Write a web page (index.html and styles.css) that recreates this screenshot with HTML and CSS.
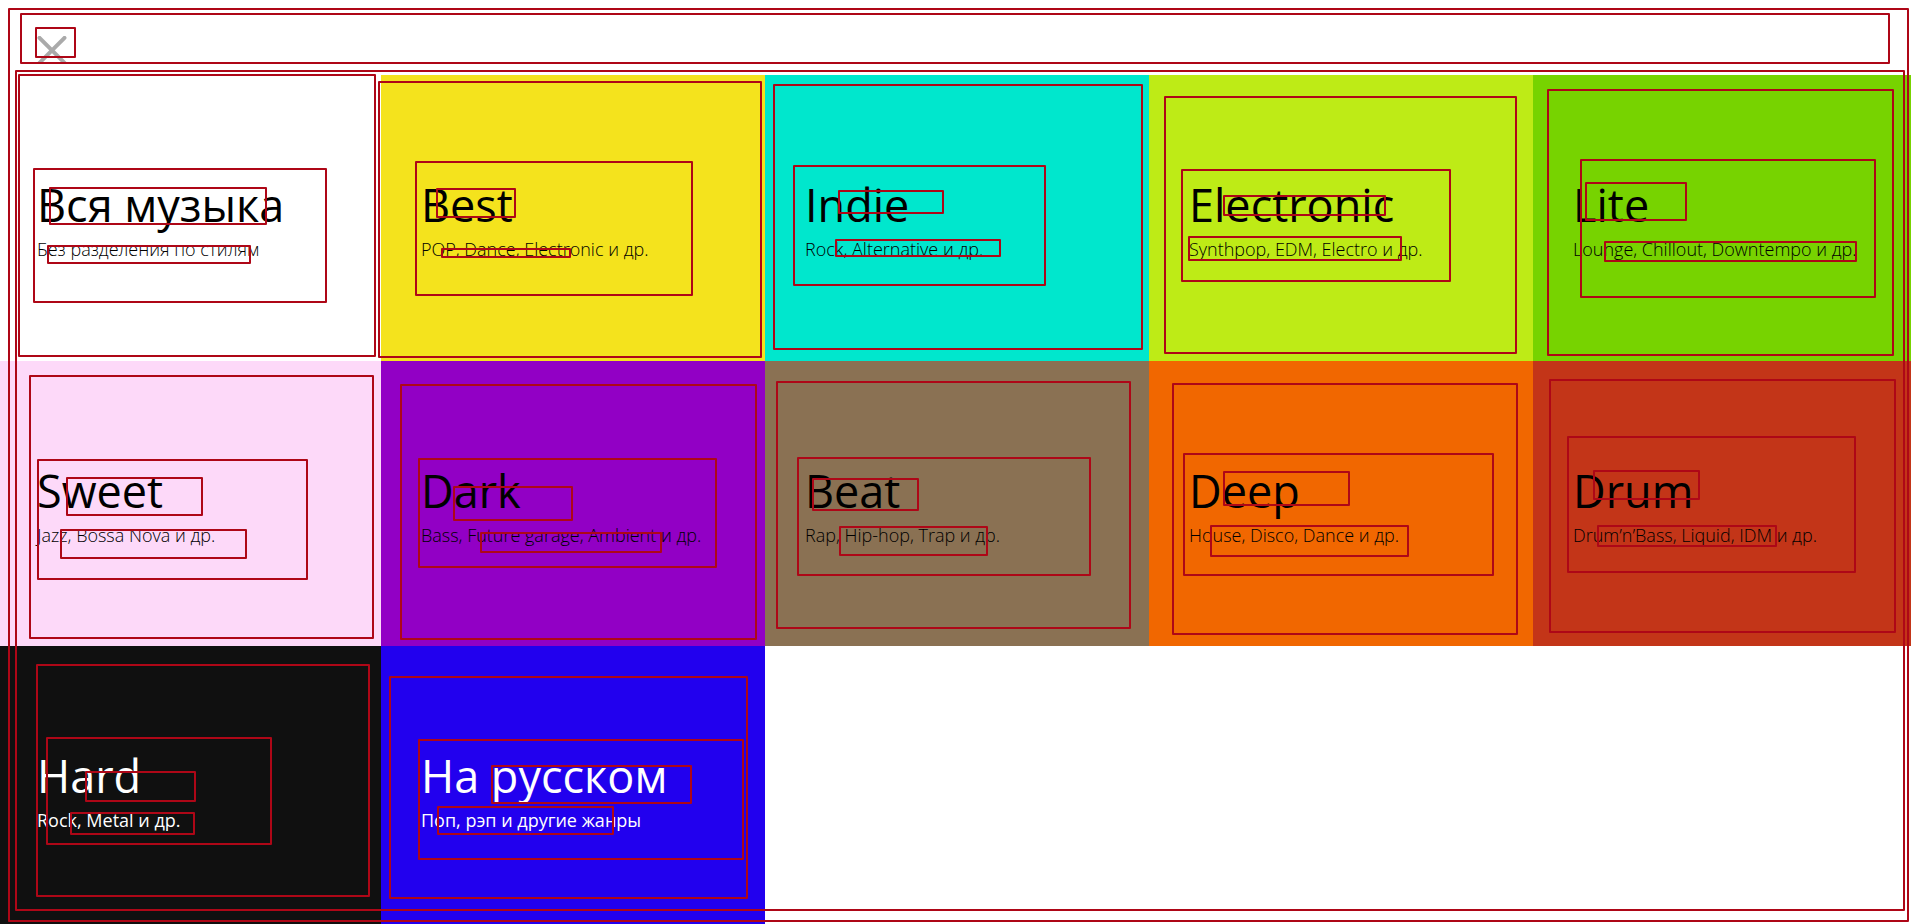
FILE: index.html
```html
<!DOCTYPE html>
<html lang="ru">
<head>
<meta charset="utf-8">
<meta name="viewport" content="width=device-width, initial-scale=1">
<title>Стили музыки</title>
<link rel="stylesheet" href="styles.css">
</head>
<body>
<header class="topbar">
  <button class="close" type="button" aria-label="Закрыть">
    <svg class="close-icon" viewBox="0 0 30 26" width="30" height="26" aria-hidden="true"><path d="M2.5 1.8 27.5 26.8M27.5 1.8 2.5 26.8"/></svg>
  </button>
</header>
<main class="styles">
  <a class="tile all" href="#all"><h2 class="name">Вся музыка</h2><p class="genres">Без разделения по стилям</p></a>
  <a class="tile best" href="#best"><h2 class="name">Best</h2><p class="genres">POP, Dance, Electronic и др.</p></a>
  <a class="tile indie" href="#indie"><h2 class="name">Indie</h2><p class="genres">Rock, Alternative и др.</p></a>
  <a class="tile electronic" href="#electronic"><h2 class="name">Electronic</h2><p class="genres">Synthpop, EDM, Electro и др.</p></a>
  <a class="tile lite" href="#lite"><h2 class="name">Lite</h2><p class="genres">Lounge, Chillout, Downtempo и др.</p></a>
  <a class="tile sweet" href="#sweet"><h2 class="name">Sweet</h2><p class="genres">Jazz, Bossa Nova и др.</p></a>
  <a class="tile dark" href="#dark"><h2 class="name">Dark</h2><p class="genres">Bass, Future garage, Ambient и др.</p></a>
  <a class="tile beat" href="#beat"><h2 class="name">Beat</h2><p class="genres">Rap, Hip-hop, Trap и др.</p></a>
  <a class="tile deep" href="#deep"><h2 class="name">Deep</h2><p class="genres">House, Disco, Dance и др.</p></a>
  <a class="tile drum" href="#drum"><h2 class="name">Drum</h2><p class="genres">Drum’n’Bass, Liquid, IDM и др.</p></a>
  <a class="tile hard light-text" href="#hard"><h2 class="name">Hard</h2><p class="genres">Rock, Metal и др.</p></a>
  <a class="tile russian light-text" href="#russian"><h2 class="name">На русском</h2><p class="genres">Поп, рэп и другие жанры</p></a>
</main>
<!-- Region outlines drawn over the page -->
<svg class="outlines" aria-hidden="true">
  <rect x="9" y="9" width="1899" height="912"/>
  <rect x="21" y="14" width="1868" height="49"/>
  <rect x="36" y="28" width="39" height="29"/>
  <rect x="16" y="71" width="1888" height="839"/>

  <rect x="19" y="75" width="356" height="281"/>
  <rect x="34" y="169" width="292" height="133"/>
  <rect x="50" y="188" width="216" height="36"/>
  <rect x="48" y="246" width="202" height="17"/>

  <rect x="379" y="82" width="382" height="275"/>
  <rect x="416" y="162" width="276" height="133"/>
  <rect x="437" y="189" width="78" height="28"/>
  <rect x="442" y="249" width="128" height="8"/>

  <rect x="774" y="85" width="368" height="264"/>
  <rect x="794" y="166" width="251" height="119"/>
  <rect x="839" y="191" width="104" height="22"/>
  <rect x="836" y="240" width="164" height="16"/>

  <rect x="1165" y="97" width="351" height="256"/>
  <rect x="1182" y="170" width="268" height="111"/>
  <rect x="1224" y="196" width="161" height="19"/>
  <rect x="1189" y="237" width="212" height="23"/>

  <rect x="1548" y="90" width="345" height="265"/>
  <rect x="1581" y="160" width="294" height="137"/>
  <rect x="1586" y="183" width="100" height="37"/>
  <rect x="1605" y="242" width="251" height="19"/>

  <rect x="30" y="376" width="343" height="262"/>
  <rect x="38" y="460" width="269" height="119"/>
  <rect x="67" y="478" width="135" height="37"/>
  <rect x="61" y="530" width="185" height="28"/>

  <rect x="401" y="385" width="355" height="254"/>
  <rect x="419" y="459" width="297" height="108"/>
  <rect x="454" y="487" width="118" height="33"/>
  <rect x="481" y="533" width="180" height="19"/>

  <rect x="777" y="382" width="353" height="246"/>
  <rect x="798" y="458" width="292" height="117"/>
  <rect x="813" y="479" width="105" height="31"/>
  <rect x="840" y="527" width="147" height="28"/>

  <rect x="1173" y="384" width="344" height="250"/>
  <rect x="1184" y="454" width="309" height="121"/>
  <rect x="1224" y="472" width="125" height="33"/>
  <rect x="1211" y="526" width="197" height="30"/>

  <rect x="1550" y="380" width="345" height="252"/>
  <rect x="1568" y="437" width="287" height="135"/>
  <rect x="1594" y="471" width="105" height="28"/>
  <rect x="1598" y="526" width="178" height="20"/>

  <rect x="37" y="665" width="332" height="231"/>
  <rect x="47" y="738" width="224" height="106"/>
  <rect x="86" y="772" width="109" height="29"/>
  <rect x="71" y="813" width="123" height="21"/>

  <rect x="390" y="677" width="357" height="221"/>
  <rect x="419" y="740" width="324" height="119"/>
  <rect x="492" y="766" width="199" height="37"/>
  <rect x="438" y="807" width="175" height="27"/>
</svg>
</body>
</html>
```

FILE: styles.css
```css
* {
  box-sizing: border-box;
}

body {
  position: relative;
  height: 100vh;
  margin: 0;
  overflow: hidden;
  background: #fff;
  color: #000;
  font-family: "Open Sans", "Noto Sans", sans-serif;
}

.topbar {
  display: flex;
  height: 75px;
  padding: 36px 37px 0;
}

.close {
  width: 30px;
  height: 26px;
  padding: 0;
  border: 0;
  background: none;
  cursor: pointer;
}

.close-icon {
  display: block;
  fill: none;
  stroke: #aaa;
  stroke-width: 4;
  stroke-linecap: round;
}

/* The grid bleeds slightly past both window edges */
.styles {
  display: grid;
  grid-template-columns: repeat(5, 1fr);
  margin: 0 -6px 0 -3px;
}

.tile {
  display: flex;
  flex-direction: column;
  justify-content: center;
  gap: 2px;
  aspect-ratio: 168 / 125;
  padding: 4px 40px 0;
  color: #000;
  text-decoration: none;
  white-space: nowrap;
}

.name {
  margin: 0;
  font-size: 45px;
  font-weight: 400;
  line-height: 56px;
}

.genres {
  margin: 0;
  font-size: 18px;
  font-weight: 300;
  line-height: 28px;
}

.light-text {
  color: #fff;
}

.light-text .genres {
  font-weight: 400;
}

.all { background: #fff; }
.best { background: #f4e31d; }
.indie { background: #00e7cd; }
.electronic { background: #beeb16; }
.lite { background: #77d300; }
.sweet { background: #fdd9f9; }
.dark { background: #9200c5; }
.beat { background: #8a7153; }
.deep { background: #f16700; }
.drum { background: #c33518; }
.hard { background: #101010; }
.russian { background: #2200ee; }

.outlines {
  position: absolute;
  inset: 0;
  width: 100%;
  height: 100%;
  pointer-events: none;
  fill: none;
  stroke: #ae0717;
  stroke-width: 2;
  stroke-linejoin: round;
}
```
